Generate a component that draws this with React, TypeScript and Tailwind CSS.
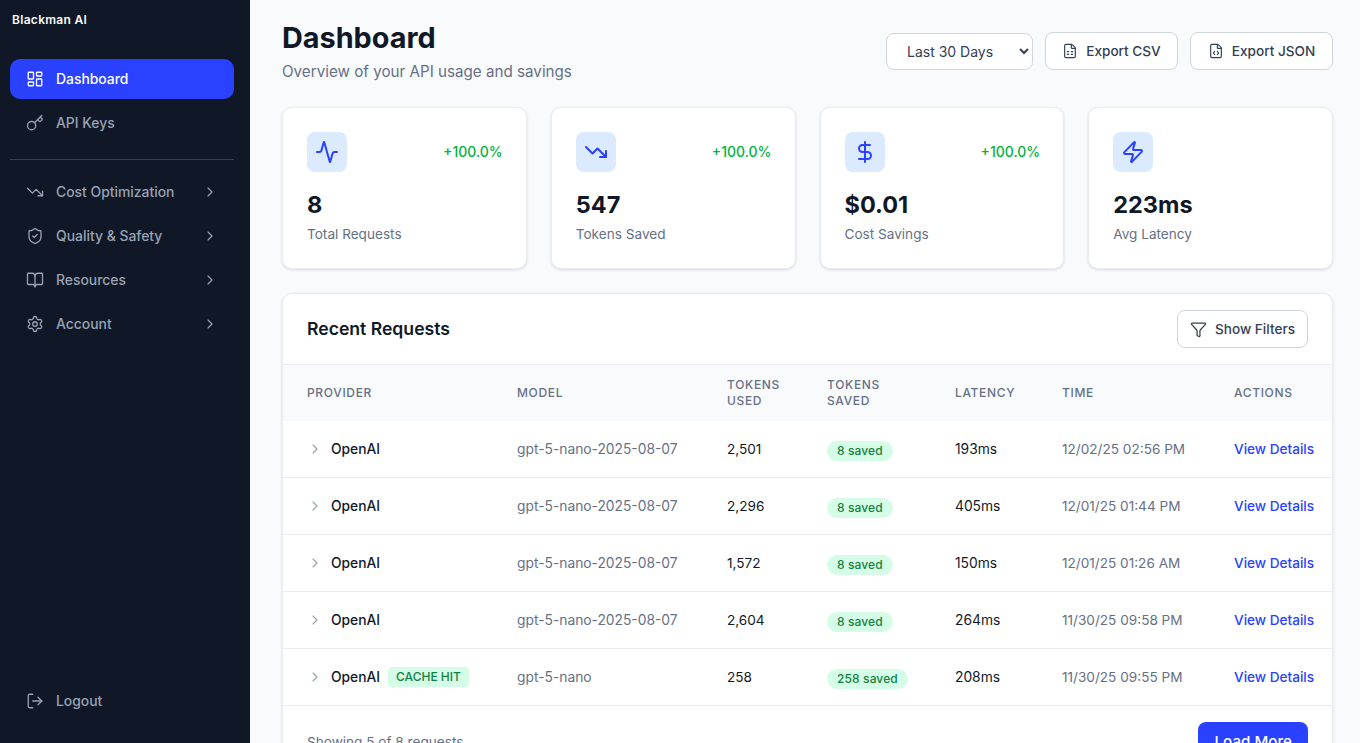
import React from "react";
import { LayoutDashboard, Key, TrendingDown, ShieldCheck, BookOpen, Settings, ChevronRight, LogOut, Activity, DollarSign, Zap, FileSpreadsheet, FileCode, Funnel } from "lucide-react";

function NavItem({ icon: Icon, label, active, chevron }: { icon: any; label: string; active?: boolean; chevron?: boolean }) {
  return (
    <div className={"flex h-10 items-center rounded-[10px] px-4 text-[13.9px] font-medium " + (active ? "bg-[#2a41ff] text-white" : "text-[#98a2b3]")}>
      <Icon size={18} strokeWidth={1.75} className="mr-3 shrink-0" />
      <span className="flex-1">{label}</span>
      {chevron && <ChevronRight size={16} strokeWidth={1.75} />}
    </div>
  );
}

function Stat({ icon: Icon, value, label, delta }: { icon: any; value: string; label: string; delta?: boolean }) {
  return (
    <div className="h-[162px] rounded-[10px] border border-[#eaecf0] bg-white p-6 shadow-[0_1px_3px_rgba(16,24,40,0.14)]">
      <div className="flex items-center justify-between">
        <div className="flex h-10 w-10 items-center justify-center rounded-lg bg-[#dbeafe] text-[#2a41ff]">
          <Icon size={24} strokeWidth={2} />
        </div>
        {delta && <span className="-mr-px text-sm font-medium text-[#00b341]">+100.0%</span>}
      </div>
      <div className="mt-[17px] text-[23.5px] leading-8 font-bold text-[#101828]">{value}</div>
      <div className="mt-[3px] text-[13.6px] leading-5 text-[#667085]">{label}</div>
    </div>
  );
}

const rows = [
  ["gpt-5-nano-2025-08-07", "2,501", "8 saved", "193ms", "12/02/25 02:56 PM", false],
  ["gpt-5-nano-2025-08-07", "2,296", "8 saved", "405ms", "12/01/25 01:44 PM", false],
  ["gpt-5-nano-2025-08-07", "1,572", "8 saved", "150ms", "12/01/25 01:26 AM", false],
  ["gpt-5-nano-2025-08-07", "2,604", "8 saved", "264ms", "11/30/25 09:58 PM", false],
  ["gpt-5-nano", "258", "258 saved", "208ms", "11/30/25 09:55 PM", true],
] as const;

const th = "px-6 text-left align-middle text-xs leading-4 font-medium tracking-[0.055em] text-[#667085] uppercase";

export default function App() {
  return (
    <div className="flex h-[743px] overflow-hidden bg-[#f9fafc] font-['Inter',sans-serif]">
      <aside className="flex w-[250px] shrink-0 flex-col bg-[#101828] pr-4 pl-[10px]">
        <div className="pt-[12px] pl-[2px] text-xs leading-4 font-semibold tracking-[0.025em] text-[#f9fafb]">Blackman AI</div>
        <nav className="mt-[31px] flex flex-col gap-1">
          <NavItem icon={LayoutDashboard} label="Dashboard" active />
          <NavItem icon={Key} label="API Keys" />
        </nav>
        <div className="mt-[16px] mb-[12px] border-t border-[#344054]" />
        <nav className="flex flex-col gap-1">
          <NavItem icon={TrendingDown} label="Cost Optimization" chevron />
          <NavItem icon={ShieldCheck} label="Quality & Safety" chevron />
          <NavItem icon={BookOpen} label="Resources" chevron />
          <NavItem icon={Settings} label="Account" chevron />
        </nav>
        <div className="mt-auto pb-[22px]">
          <NavItem icon={LogOut} label="Logout" />
        </div>
      </aside>
      <main className="min-w-0 flex-1 pt-[22px] pr-[27px] pl-8">
        <header className="flex items-start justify-between">
          <div>
            <h1 className="text-[28.8px] leading-8 font-bold text-[#101828]">Dashboard</h1>
            <p className="mt-[6px] text-[15.2px] leading-6 text-[#667085]">Overview of your API usage and savings</p>
          </div>
          <div className="mt-[10px] flex items-center gap-3">
            <select className="h-[37px] w-[147px] rounded-lg border border-[#d0d5dd] bg-white pl-4 text-sm text-[#344054]">
              <option>Last 30 Days</option>
            </select>
            <button className="flex h-[38px] w-[133px] items-center justify-center gap-2 rounded-lg border border-[#d0d5dd] bg-white text-[13.6px] font-medium text-[#344054]">
              <FileSpreadsheet size={16} strokeWidth={1.75} />Export CSV
            </button>
            <button className="flex h-[38px] w-[143px] items-center justify-center gap-2 rounded-lg border border-[#d0d5dd] bg-white text-[13.6px] font-medium text-[#344054]">
              <FileCode size={16} strokeWidth={1.75} />Export JSON
            </button>
          </div>
        </header>
        <section className="mt-[23px] grid grid-cols-4 gap-6">
          <Stat icon={Activity} value="8" label="Total Requests" delta />
          <Stat icon={TrendingDown} value="547" label="Tokens Saved" delta />
          <Stat icon={DollarSign} value="$0.01" label="Cost Savings" delta />
          <Stat icon={Zap} value="223ms" label="Avg Latency" />
        </section>
        <section className="mt-6 rounded-[10px] border border-[#eaecf0] bg-white shadow-[0_1px_3px_rgba(16,24,40,0.14)]">
          <div className="flex h-[71px] items-center justify-between border-b border-[#eaecf0] px-6">
            <h2 className="text-[17.6px] font-semibold text-[#101828]">Recent Requests</h2>
            <button className="flex h-[38px] w-[131px] items-center justify-center gap-2 rounded-lg border border-[#d0d5dd] bg-white text-[13.6px] font-medium text-[#344054]">
              <Funnel size={17} strokeWidth={1.75} />Show Filters
            </button>
          </div>
          <table className="w-full table-fixed border-separate border-spacing-0">
            <colgroup>
              <col className="w-[210px]" />
              <col className="w-[210px]" />
              <col className="w-[100px]" />
              <col className="w-[128px]" />
              <col className="w-[107px]" />
              <col className="w-[172px]" />
              <col />
            </colgroup>
            <thead>
              <tr className="h-[56px] bg-[#f9fafc]">
                <th className={th}>Provider</th>
                <th className={th}>Model</th>
                <th className={th}>Tokens Used</th>
                <th className={th}>Tokens Saved</th>
                <th className={th}>Latency</th>
                <th className={th}>Time</th>
                <th className={th}>Actions</th>
              </tr>
            </thead>
            <tbody>
              {rows.map((r, i) => (
                <tr key={i} className="h-[57px] text-[13.8px]">
                  <td className="border-b border-[#eaecf0] pl-6 whitespace-nowrap">
                    <div className="flex items-center">
                      <ChevronRight size={16} strokeWidth={1.75} className="text-[#98a2b3]" />
                      <span className="ml-2 font-medium text-[#101828]">OpenAI</span>
                      {r[5] && <span className="ml-2 rounded bg-[#d4fce6] px-2 py-[2px] text-xs leading-4 font-medium text-[#15803d]">CACHE HIT</span>}
                    </div>
                  </td>
                  <td className="border-b border-[#eaecf0] px-6 whitespace-nowrap text-[#667085]">{r[0]}</td>
                  <td className="border-b border-[#eaecf0] px-6 text-[13.6px] text-[#101828]">{r[1]}</td>
                  <td className="border-b border-[#eaecf0] px-6 whitespace-nowrap">
                    <span className="mt-[3px] inline-block rounded-full bg-[#d4fce6] px-[10px] py-[2px] text-xs leading-4 font-medium tracking-[0.01em] text-[#15803d]">{r[2]}</span>
                  </td>
                  <td className="border-b border-[#eaecf0] px-6 text-[#101828]">{r[3]}</td>
                  <td className="border-b border-[#eaecf0] px-6 text-[13.6px] whitespace-nowrap text-[#667085]">{r[4]}</td>
                  <td className="border-b border-[#eaecf0] pl-6 text-[13.6px] whitespace-nowrap font-medium text-[#2a41ff]">View Details</td>
                </tr>
              ))}
            </tbody>
          </table>
          <div className="flex items-center justify-between px-6 py-4">
            <span className="text-[13.6px] text-[#667085]">Showing 5 of 8 requests</span>
            <button className="h-10 rounded-lg bg-[#2a41ff] px-4 text-[15.2px] font-medium text-white">Load More</button>
          </div>
        </section>
      </main>
    </div>
  );
}
